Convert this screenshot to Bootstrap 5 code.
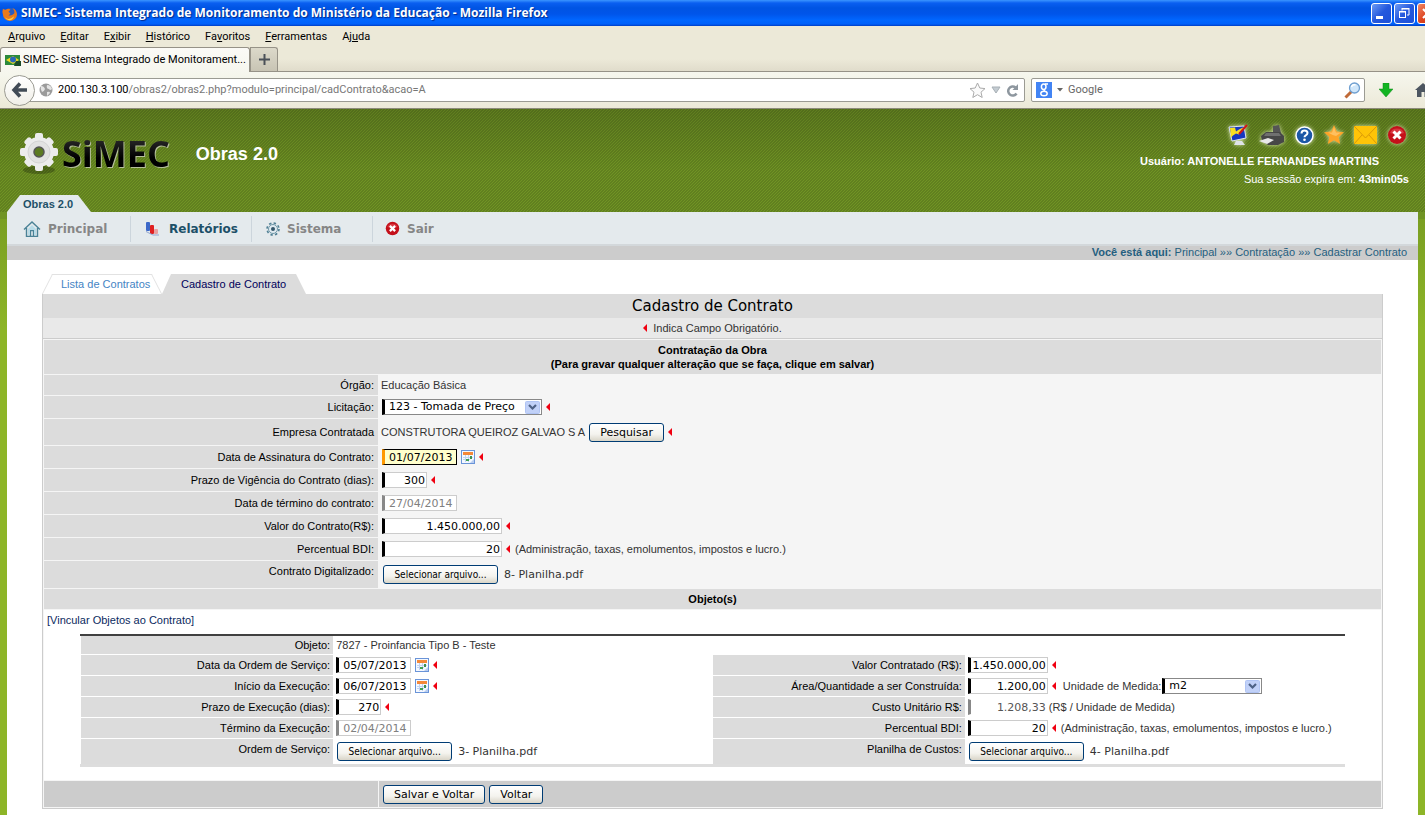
<!DOCTYPE html>
<html lang="pt-BR">
<head>
<meta charset="utf-8">
<meta name="viewport" content="width=device-width, initial-scale=1">
<title>SIMEC - Cadastro de Contrato</title>
<link href="https://cdn.jsdelivr.net/npm/bootstrap@5.3.0/dist/css/bootstrap.min.css" rel="stylesheet">
<style>
:root{--ui:Roboto,"DejaVu Sans Condensed",sans-serif;--wide:"DejaVu Sans",sans-serif;--doc:"Liberation Sans",Arial,sans-serif;--edge:#ccc}
body{font:11px/14px var(--doc);color:#333;background:#fff;min-height:100vh}
a{text-decoration:none;color:inherit}
svg{display:block;flex-shrink:0}
button{font:inherit}
.ui{font-family:var(--ui);font-size:11px;color:#000}

/* browser window */
.titlebar{height:26px;padding-left:2px;background:linear-gradient(#3b95ff,#0a5ff0 3px,#0054e3 8px,#0055ea 14px,#0066ff 20px,#0060fa 24px,#003dc4 26px);color:#fff;overflow:hidden}
.titlebar h1{font:700 12px/16px "Open Sans",sans-serif;text-shadow:1px 1px 1px #002a8a}
.winbtns{margin-right:-13px;gap:2px}
.winbtn{width:21px;height:21px;padding:0;border:1px solid #fff;border-radius:3px;background:linear-gradient(135deg,#6c9bf5,#2458dd 50%,#1d50d8)}
.winbtn.close-x{background:linear-gradient(135deg,#f08a68,#dd4420 50%,#c8380f)}
.menubar{height:21px;padding-left:8px;gap:15px;background:#ece9d8}
.tabstrip{height:25px;background:linear-gradient(#ece9d8 50%,#e0dccb);border-bottom:1px solid #969287}
.btab{width:250px;height:25px;padding:0 0 0 4px;gap:2px;background:linear-gradient(#fbfaf6,#f6f6ee);border:1px solid #969287;border-bottom:0;border-radius:3px 3px 0 0;margin-bottom:-1px}
.newtab{width:28px;height:24px;border:1px solid #969287;border-bottom:0;border-radius:0 3px 0 0;background:linear-gradient(#dcd9ca,#c8c4b4);padding:0}
.toolbar{height:37px;padding-left:4px;background:linear-gradient(#f6f7ee,#ece9d8);border-bottom:1px solid #8c8a7a;overflow:hidden}
.back{width:31px;height:31px;border-radius:50%;border:1px solid #9b9b93;background:linear-gradient(#fff,#f0efe8);padding:0;z-index:1;flex-shrink:0}
.urlbox{height:24px;border:1px solid #9b9b93;border-radius:2px;background:#fff;margin-left:-16px;padding:0 5px 0 19px;gap:5px}
.urlbox a{color:#777}
.searchbox{width:334px;height:24px;border:1px solid #9b9b93;border-radius:2px;background:#fff;margin-left:6px;padding:0 3px 0 4px;gap:5px;flex-shrink:0}
.searchbox input{border:0;outline:0;padding:0;min-width:0;background:none}
.searchbox input::placeholder{color:#666;opacity:1}
.tools{margin:0 -6px 0 14px;gap:22px;flex-shrink:0}

/* application frame */
.stage{background:#8db528 linear-gradient(#709424,#709424 110px,#7a9f22 110px,#8db528 220px) no-repeat}
.app{background:linear-gradient(135deg,#0002 25%,#0000 25%,#0000 50%,#0002 50%,#0002 75%,#0000 75%) 0 0/3px 3px,linear-gradient(#00000026,#0000 60%);height:103px}
.brand{font:700 36px/40px "Open Sans",sans-serif;background:linear-gradient(#333,#000 60%);-webkit-background-clip:text;background-clip:text;color:transparent;filter:drop-shadow(1px 1px 0 #b5bf9c)}
.module{font:700 18px/22px var(--doc);color:#fff;margin-left:26px}
.quick{gap:10px;padding-right:18px}
.quick svg{filter:drop-shadow(0 0 2px #d8e6b0)}
.userbox{color:#fff;text-align:right;padding-top:15px}
.username{padding-right:46px}
.modtab{width:84px;height:17px;margin-left:7px;padding:2px 0 0 16px;font-weight:700;color:#1d5068;background:#e4eaed;clip-path:polygon(13px 0,71px 0,84px 100%,0 100%)}
.mainbar{height:34px;margin:0 7px;padding-top:1px;background:#e4eaed;border-bottom:2px solid #d3d8db}
.mainbar a{padding-left:14px;gap:7px;font:700 12px/16px var(--wide);color:#868686}
.mainbar li{display:flex;width:121px;height:26px}
.mainbar li:first-child{width:123px;padding-left:2px}
.mainbar li + li{border-left:1px solid #ccd5dc}
.mainbar li.on a{color:#1d5068;gap:8px}
.crumbs{height:14px;line-height:12px;margin:0 7px;padding:0 11px;background:#ccc;color:#255f80}
.paper{margin:0 7px;padding:14px 35px 6px;background:#fff}

/* page tabs */
.ptab{position:relative;height:20px;line-height:20px;padding:0 0 0 19px}
.ptab.off{width:120px;color:#4484c4}
.ptab.off::before,.ptab.off::after{content:"";position:absolute;top:0;bottom:0;border-top:1px solid #e2e2e2}
.ptab.off::before{left:5px;width:50%;border-left:1px solid #e2e2e2;transform:skewX(-27deg)}
.ptab.off::after{right:5px;width:50%;border-right:1px solid #e2e2e2;transform:skewX(27deg)}
.ptab.cur{width:144px;color:#00005a;background:#dcdcdc;clip-path:polygon(9px 0,134px 0,144px 100%,0 100%)}

/* contract form */
.panel{border:1px solid var(--edge);border-top:0}
.panel h2{font:15px/24px var(--wide);margin:0;color:#000;background:#dcdcdc;text-align:center}
.hint{height:21px;background:#e9e9e9;border-bottom:1px solid var(--edge);gap:6px}
.grid{width:100%;border-collapse:separate;border-spacing:1px;background:#f5f5f5;table-layout:fixed}
.grid th,.grid td{padding:0 4px 0 3px;vertical-align:middle;height:22px}
.grid td{padding-left:2px}
.grid th{background:#dcdcdc;color:#000;font-weight:400;text-align:right}
.grid th.band{text-align:center;font-weight:700;height:20px;padding:0 3px}
.grid th.top,.sub th.top{vertical-align:top;padding-top:3px}
.grid .white{background:#fff;padding:3px 3px 13px}
.grid .foot td{background:#ccc;height:26px;padding-left:3px}
.h20{height:20px!important}.h26{height:26px!important}.h27{height:27px!important}.h34{height:34px!important}
.sub{width:95%;margin:7px auto 0;border-collapse:separate;border-spacing:1px 0;border-top:2px solid #404040;border-bottom:3px solid #ddd;table-layout:fixed}
.sub th,.sub td{height:21px;padding:0 3px 0 2px;border-top:1px solid #fff}
.sub tr:first-child > *{height:18px;border-top:0}
.sub tr:last-child > *{height:26px}
.fld{display:flex;align-items:center}
.grid > tbody > tr > td > .fld{padding-left:1px}
.fld > *{flex-shrink:0}
.inp{height:16px;border:1px solid #ccc;border-left:3px solid #000;padding:0 1px 0 4px;font:11px/14px var(--wide);color:#000;background:#fff;border-radius:0;outline:0}
select.inp{border-color:#888;border-left-color:#000;padding:0 0 0 4px;appearance:none;background:#fff url("data:image/svg+xml,%3Csvg xmlns='http://www.w3.org/2000/svg' width='16' height='13'%3E%3Crect x='.5' y='.5' width='14' height='12' rx='1' fill='%23c1d1f8' stroke='%23b0c4f4'/%3E%3Cpath d='M4 4l3.500 3.500L11 4' fill='none' stroke='%234d6185' stroke-width='2.200'/%3E%3C/svg%3E") no-repeat right 0 center}
.inp:disabled{color:#808080;opacity:1;border-left-color:#888;background:#fff}
.inp.hot{background:#ffc;border-color:#000;border-left-color:#f90}
.inp.bare{border-color:transparent;border-left-color:#888;color:#555}
.w-s{width:45px}.w-d{width:75px}.w-m{width:80px;padding-left:1px}.w-u{width:100px}.w-l{width:120px}.w-x{width:160px}
.xbtn{height:19px;padding:0 10px;border:1px solid #003c74;border-radius:3px;background:linear-gradient(#fff,#f4f3ee 60%,#d9d5c8);font:11px/15px var(--wide);color:#000}
.xfile{font-family:"DejaVu Sans Condensed",sans-serif;font-size:10px;width:115px;margin-left:1px;padding:0;white-space:nowrap}
.fname{font:11px/14px var(--wide);margin-left:6px}
.req{display:inline-block;width:0;height:0;border:solid transparent;border-width:4px 4px 4px 0;border-right-color:#f00010;margin:0 4px 0 4px}
.cal{margin-left:4px}
.unit{margin:0 1px 0 3px}
.legal{margin-left:1px}
.bindlink{color:#0b2a60}
</style>
</head>
<body class="d-flex flex-column">

<svg width="0" height="0" class="position-absolute" aria-hidden="true">
  <defs>
    <symbol id="cal" viewBox="0 0 14 14"><rect x=".5" y=".5" width="13" height="13" fill="#f4f8ff" stroke="#6a94d8"/><rect x="2" y="2" width="10" height="3" fill="#f58838"/><path d="M2 7.500h10M2 9.500h7M4.500 5v7M7.500 5v7" stroke="#c0d2f0"/><rect x="9" y="6" width="2" height="3" fill="#3f8f50"/><rect x="5" y="9" width="3" height="2" fill="#3f9f50"/><path d="M13 9v4H9z" fill="#b8cdf0"/></symbol>
    <symbol id="redx" viewBox="0 0 20 20"><circle cx="10" cy="10" r="9" fill="#c4101a"/><path d="M3 8a7.500 7 0 0 1 14 0q-7 3-14 0z" fill="#e8505a" opacity=".6"/><path d="M6.500 6.500l7 7m0-7l-7 7" stroke="#fff" stroke-width="3"/></symbol>
  </defs>
</svg>

<header>
  <div class="titlebar d-flex align-items-center gap-1">
    <svg width="15" height="15" viewBox="0 0 16 16"><circle cx="8.500" cy="8" r="6" fill="#2a5cc0"/><path d="M1 3q1 1 3 1Q7 2 9 4L7 6l2 2-2 2q3 1 6-2 1-3-2-6 5 2 5 7a7.500 7 0 0 1-15 0Q0 6 1 3z" fill="#e87a1c"/><path d="M3 12q4 4 10-1-2 5-6 4-3-1-4-3z" fill="#ffcf40"/></svg>
    <h1 class="m-0 text-nowrap flex-grow-1">SIMEC- Sistema Integrado de Monitoramento do Ministério da Educação - Mozilla Firefox</h1>
    <div class="winbtns d-flex">
      <button class="winbtn" aria-label="Minimizar"><svg width="19" height="19"><path d="M4 13.500h7" stroke="#fff" stroke-width="3"/></svg></button>
      <button class="winbtn" aria-label="Restaurar"><svg width="19" height="19" fill="none" stroke="#fff"><path d="M7 6.500V5h7v6h-2M6.500 4.500h8" /><rect x="4.500" y="7.500" width="6" height="6"/><path d="M4 8h7"/></svg></button>
      <button class="winbtn close-x" aria-label="Fechar"><svg width="19" height="19"><path d="M5 5l9 9m0-9l-9 9" stroke="#fff" stroke-width="2"/></svg></button>
    </div>
  </div>
  <nav class="menubar ui d-flex align-items-center">
    <a href="#"><u>A</u>rquivo</a><a href="#"><u>E</u>ditar</a><a href="#">E<u>x</u>ibir</a><a href="#"><u>H</u>istórico</a><a href="#">Fa<u>v</u>oritos</a><a href="#"><u>F</u>erramentas</a><a href="#">Aj<u>u</u>da</a>
  </nav>
  <div class="tabstrip d-flex">
    <div class="btab ui d-flex align-items-center text-nowrap">
      <svg width="16" height="12" viewBox="0 0 16 12"><rect y="1" width="15" height="10" fill="#2c8a3c"/><path d="M1 6l7-4 6 4-6 4z" fill="#f0d820"/><circle cx="8" cy="5.500" r="3" fill="#2a68b8"/><path d="M9 12l2-5h5v5z" fill="#1a4a28"/></svg>
      <span>SIMEC- Sistema Integrado de Monitorament...</span>
    </div>
    <button class="newtab" aria-label="Nova aba"><svg class="mx-auto" width="11" height="11"><path d="M5.500 0v11M0 5.500h11" stroke="#4a5058" stroke-width="2"/></svg></button>
  </div>
  <div class="toolbar d-flex align-items-center">
    <button class="back" aria-label="Voltar página"><svg class="mx-auto" width="17" height="16" fill="none" stroke="#414b56" stroke-width="3.500"><path d="M9 1.500L3 8l6 6.500M3 8h13"/></svg></button>
    <div class="urlbox ui d-flex align-items-center flex-grow-1">
      <svg width="14" height="14"><circle cx="7" cy="7" r="6.500" fill="#9b9b9b"/><path d="M2 3q3 0 4 3-1 3-3 3Q1 6 2 3zM8 2q4 0 5 4-2 2-3 0-3 0-2-4zM8 9q3-1 3 1l-3 3z" fill="#e4e4e4"/></svg>
      <a href="#" class="flex-grow-1"><span class="text-black">200.130.3.100</span>/obras2/obras2.php?modulo=principal/cadContrato&amp;acao=A</a>
      <svg width="17" height="16"><path d="M8.500 1l2.300 5 5.200.6-4 3.600 1.200 5.300-4.700-2.800-4.700 2.800L5 10.200 1 6.600 6.200 6z" fill="#fafafa" stroke="#aaa"/></svg>
      <svg width="10" height="8"><path d="M1 1h8L5 7z" fill="#c4ccd2" stroke="#a8b0b6"/></svg>
      <svg width="13" height="13" fill="none"><path d="M10.500 9.500a4.500 4.500 0 1 1-1-6" stroke="#8e979f" stroke-width="2.500"/><path d="M12 0v6H6.500z" fill="#8e979f"/></svg>
    </div>
    <div class="searchbox ui d-flex align-items-center">
      <svg width="16" height="16" viewBox="0 0 16 16"><rect width="16" height="16" fill="#4284f4"/><g fill="none" stroke="#fff" stroke-width="1.500"><ellipse cx="7.700" cy="4.700" rx="2.300" ry="2.700"/><path d="M9 2h3M8.500 7.500q-1 1 .5 2"/><ellipse cx="8" cy="11.500" rx="3.200" ry="2.300"/></g></svg>
      <svg width="6" height="4"><path d="M0 0h6L3 3.500z" fill="#666"/></svg>
      <input class="ui flex-grow-1" type="text" placeholder="Google" aria-label="Pesquisar na web">
      <svg width="17" height="17"><path d="M1.500 15.500l6-6" stroke="#c06a38" stroke-width="3"/><circle cx="10.500" cy="6" r="5" fill="#cfe6fa" stroke="#6f9fd0" stroke-width="1.300"/><path d="M7.500 5q1-3 4-2" stroke="#fff" stroke-width="1.500" fill="none"/></svg>
    </div>
    <div class="tools d-flex align-items-center">
      <svg width="14" height="14"><path d="M4 0h6v6h4l-7 8-7-8h4z" fill="#12b422" stroke="#0c8a1a" stroke-width=".5"/></svg>
      <svg width="16" height="14"><path d="M8 0l8 7h-2v7H9.500V9h-3v5H2V7H0z" fill="#4d5661"/></svg>
    </div>
  </div>
</header>

<div class="stage flex-grow-1 d-flex flex-column">
  <div class="app d-flex flex-column justify-content-between">
    <div class="d-flex align-items-start">
      <div class="d-flex align-items-center ps-3 pt-4 ms-1">
        <svg width="38" height="42" viewBox="0 0 38 42"><ellipse cx="19" cy="37" rx="16" ry="4" fill="#000" opacity=".25"/><g fill="#ececec"><circle cx="19" cy="19" r="15"/><rect x="15" y="0" width="8" height="38" rx="2"/><rect x="0" y="15" width="38" height="8" rx="2"/><g transform="rotate(45 19 19)"><rect x="15" y="1" width="8" height="36" rx="2"/><rect x="1" y="15" width="36" height="8" rx="2"/></g></g><circle cx="19" cy="19" r="11" fill="#e2e2e2" stroke="#d4d4d4"/><circle cx="19" cy="19" r="5" fill="#5c7a22" stroke="#555" stroke-width="1.500"/></svg>
        <span class="brand ms-1">SiMEC</span>
        <span class="module">Obras 2.0</span>
      </div>
      <div class="userbox ms-auto">
        <div class="quick d-flex align-items-center justify-content-end">
          <a href="#" aria-label="Tela"><svg width="21" height="22"><path d="M1 3l15-1 2 12-14 3z" fill="#1638c0" stroke="#dde4ee"/><path d="M2 4l5-.5 1 4 3-2 4-2 1 2-5 5-3-1-3 2-2 2z" fill="#f8e020"/><path d="M19 1l-8 9" stroke="#d01818" stroke-width="2"/><path d="M8 17h6l3 4H6z" fill="#dfe3e8"/></svg></a>
          <a href="#" aria-label="Imprimir"><svg width="26" height="22"><path d="M14 2l6-1 2 8h-8z" fill="#555"/><path d="M2 12l5-4h14l4 4v6l-6 3H9l-6-4z" fill="#474747"/><path d="M7 9h13l2 3H5z" fill="#707070"/><path d="M0 17l9-3 6 2-7 4z" fill="#e8e8e8"/></svg></a>
          <a href="#" aria-label="Ajuda"><svg width="19" height="19"><circle cx="9.500" cy="9.500" r="8.500" fill="#1c57a6" stroke="#fff" stroke-width="1.500"/><path d="M6.500 7.500q0-3 3-3t3 2.500q0 1.500-1.700 2.300-1.300.7-1.300 2" fill="none" stroke="#fff" stroke-width="2"/><circle cx="9.500" cy="13.800" r="1.300" fill="#fff"/></svg></a>
          <a href="#" aria-label="Favoritos"><svg width="20" height="20"><path d="M10 0l2.800 6.600 7.200.7-5.400 4.800L16.200 19 10 15.300 3.800 19l1.600-6.900L0 7.300l7.200-.7z" fill="#fda428"/><path d="M10 2l2 5.500h5L12 11q-4-1-8-3.500h4z" fill="#ffc060"/></svg></a>
          <a href="#" aria-label="Mensagens"><svg width="23" height="18"><rect width="23" height="18" fill="#ffc408"/><path d="M0 0l11.500 12L23 0M0 18l8-9M23 18l-8-9" fill="none" stroke="#d89808"/></svg></a>
          <a href="#" aria-label="Sair"><svg width="20" height="20"><use href="#redx"/></svg></a>
        </div>
        <div class="username fw-bold mt-2">Usuário: ANTONELLE FERNANDES MARTINS</div>
        <div class="mt-1 pe-3">Sua sessão expira em: <b>43min05s</b></div>
      </div>
    </div>
    <div class="modtab">Obras 2.0</div>
  </div>
  <ul class="mainbar list-unstyled d-flex align-items-center ps-0">
    <li><a href="#" class="d-flex align-items-center"><svg width="18" height="16" fill="none" stroke="#4a8296"><path d="M1 8.500L9 1l8 7.500M3.500 7v8.500h11V7M7.500 15V9.500h3V15" stroke-width="1.400"/><path d="M5 8l4-4 4 4v6h-2V9H7v5H5z" fill="#b8dce8" stroke="none"/></svg>Principal</a></li>
    <li class="on"><a href="#" class="d-flex align-items-center"><svg width="16" height="15"><rect x="1" y="1" width="4" height="9" rx="1" fill="#3c68c8"/><rect x="5" y="4" width="4" height="9" rx="1" fill="#e02020"/><rect x="9" y="8" width="4" height="5" rx="1" fill="#e8a0a0"/><path d="M1 10.500l7 3.500h6" stroke="#8fa4d0" fill="none"/></svg>Relatórios</a></li>
    <li><a href="#" class="d-flex align-items-center"><svg width="14" height="16"><circle cx="7" cy="8" r="4.500" fill="#dfeaf0" stroke="#6f97a8"/><circle cx="7" cy="8" r="6" fill="none" stroke="#4f7f94" stroke-width="1.600" stroke-dasharray="2.400 2.300"/><circle cx="7" cy="8" r="2" fill="#34566a"/></svg>Sistema</a></li>
    <li><a href="#" class="d-flex align-items-center ps-2 ms-1"><svg width="15" height="15"><use href="#redx"/></svg>Sair</a></li>
  </ul>
  <nav class="crumbs text-end" aria-label="Trilha"><b>Você está aqui:</b> <a href="#">Principal</a> »» <a href="#">Contratação</a> »» <a href="#">Cadastrar Contrato</a></nav>

  <main class="paper flex-grow-1">
    <div class="d-flex">
      <a href="#" class="ptab off">Lista de Contratos</a><a href="#" class="ptab cur">Cadastro de Contrato</a>
    </div>
    <form class="panel">
      <h2>Cadastro de Contrato</h2>
      <div class="hint d-flex align-items-center justify-content-center"><i class="req m-0"></i>Indica Campo Obrigatório.</div>
      <table class="grid">
        <colgroup><col class="w-25"><col></colgroup>
        <tr><th colspan="2" class="band h34">Contratação da Obra<br>(Para gravar qualquer alteração que se faça, clique em salvar)</th></tr>
        <tr><th class="h20">Órgão:</th><td class="h20">Educação Básica</td></tr>
        <tr><th><label for="lic">Licitação:</label></th><td><div class="fld"><select id="lic" class="inp w-x"><option>123 - Tomada de Preço</option></select><i class="req"></i></div></td></tr>
        <tr><th class="h26">Empresa Contratada</th><td class="h26"><div class="fld p-0">CONSTRUTORA QUEIROZ GALVAO S A<button type="button" class="xbtn ms-1">Pesquisar</button><i class="req"></i></div></td></tr>
        <tr><th><label for="ass">Data de Assinatura do Contrato:</label></th><td><div class="fld"><input id="ass" class="inp hot w-d" value="01/07/2013"><svg class="cal" width="14" height="14"><use href="#cal"/></svg><i class="req"></i></div></td></tr>
        <tr><th><label for="vig">Prazo de Vigência do Contrato (dias):</label></th><td><div class="fld"><input id="vig" class="inp w-s text-end" value="300"><i class="req"></i></div></td></tr>
        <tr><th><label for="fim">Data de término do contrato:</label></th><td><div class="fld"><input id="fim" class="inp w-d" value="27/04/2014" disabled></div></td></tr>
        <tr><th><label for="val">Valor do Contrato(R$):</label></th><td><div class="fld"><input id="val" class="inp w-l text-end" value="1.450.000,00"><i class="req"></i></div></td></tr>
        <tr><th><label for="bdi">Percentual BDI:</label></th><td><div class="fld"><input id="bdi" class="inp w-l text-end" value="20"><i class="req"></i><span class="legal">(Administração, taxas, emolumentos, impostos e lucro.)</span></div></td></tr>
        <tr><th class="top h27">Contrato Digitalizado:</th><td class="h27"><div class="fld"><button type="button" class="xbtn xfile">Selecionar arquivo...</button><span class="fname">8- Planilha.pdf</span></div></td></tr>
        <tr><th colspan="2" class="band">Objeto(s)</th></tr>
        <tr><td colspan="2" class="white">
          <a href="#" class="bindlink">[Vincular Objetos ao Contrato]</a>
          <table class="sub">
            <colgroup><col style="width:20%"><col style="width:30%"><col style="width:20%"><col style="width:30%"></colgroup>
            <tr><th>Objeto:</th><td colspan="3">7827 - Proinfancia Tipo B - Teste</td></tr>
            <tr><th><label for="dos">Data da Ordem de Serviço:</label></th><td><div class="fld"><input id="dos" class="inp w-d" value="05/07/2013"><svg class="cal" width="14" height="14"><use href="#cal"/></svg><i class="req"></i></div></td>
                <th><label for="vc">Valor Contratado (R$):</label></th><td><div class="fld"><input id="vc" class="inp w-m text-end" value="1.450.000,00"><i class="req"></i></div></td></tr>
            <tr><th><label for="ini">Início da Execução:</label></th><td><div class="fld"><input id="ini" class="inp w-d" value="06/07/2013"><svg class="cal" width="14" height="14"><use href="#cal"/></svg><i class="req"></i></div></td>
                <th><label for="area">Área/Quantidade a ser Construída:</label></th><td><div class="fld"><input id="area" class="inp w-m text-end" value="1.200,00"><i class="req"></i><label for="un" class="unit">Unidade de Medida:</label><select id="un" class="inp w-u"><option>m2</option></select></div></td></tr>
            <tr><th><label for="pex">Prazo de Execução (dias):</label></th><td><div class="fld"><input id="pex" class="inp w-s text-end" value="270"><i class="req"></i></div></td>
                <th><label for="cu">Custo Unitário R$:</label></th><td><div class="fld"><input id="cu" class="inp bare w-m text-end" value="1.208,33" readonly><span class="legal">(R$ / Unidade de Medida)</span></div></td></tr>
            <tr><th><label for="tex">Término da Execução:</label></th><td><div class="fld"><input id="tex" class="inp w-d" value="02/04/2014" disabled></div></td>
                <th><label for="bdi2">Percentual BDI:</label></th><td><div class="fld"><input id="bdi2" class="inp w-m text-end" value="20"><i class="req"></i><span class="legal">(Administração, taxas, emolumentos, impostos e lucro.)</span></div></td></tr>
            <tr><th class="top">Ordem de Serviço:</th><td><div class="fld"><button type="button" class="xbtn xfile">Selecionar arquivo...</button><span class="fname">3- Planilha.pdf</span></div></td>
                <th class="top">Planilha de Custos:</th><td><div class="fld"><button type="button" class="xbtn xfile">Selecionar arquivo...</button><span class="fname">4- Planilha.pdf</span></div></td></tr>
          </table>
        </td></tr>
        <tr class="foot"><td></td><td><div class="fld gap-1"><button type="submit" class="xbtn">Salvar e Voltar</button><button type="button" class="xbtn">Voltar</button></div></td></tr>
      </table>
    </form>
  </main>
</div>
<script src="https://cdn.jsdelivr.net/npm/bootstrap@5.3.0/dist/js/bootstrap.bundle.min.js"></script>
</body>
</html>
